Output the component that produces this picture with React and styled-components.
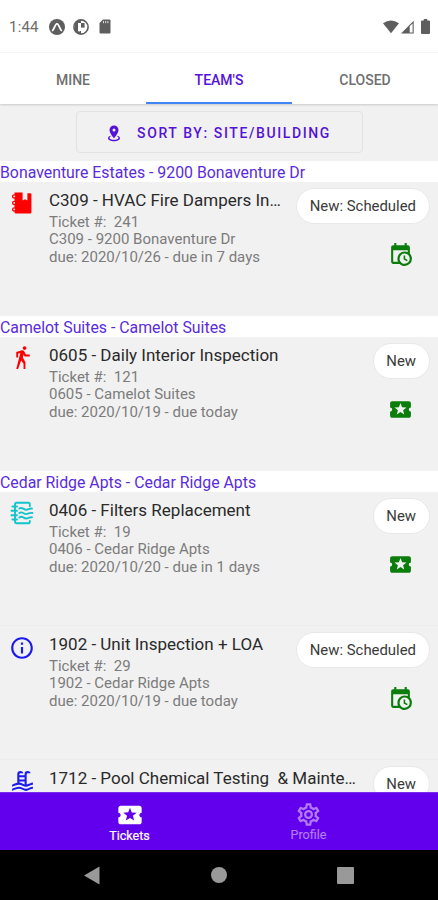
import styled, { createGlobalStyle } from "styled-components";
import { MdInfoOutline, MdLocalActivity } from "react-icons/md";

const SECTIONS = [
  {
    name: "Bonaventure Estates - 9200 Bonaventure Dr",
    tickets: [
      { icon: "damper", color: "#ff0000", title: "C309 - HVAC Fire Dampers Inspection", number: 241, site: "C309 - 9200 Bonaventure Dr", due: "2020/10/26 - due in 7 days", status: "New: Scheduled" },
    ],
  },
  {
    name: "Camelot Suites - Camelot Suites",
    tickets: [
      { icon: "walk", color: "#ff0000", title: "0605 - Daily Interior Inspection", number: 121, site: "0605 - Camelot Suites", due: "2020/10/19 - due today", status: "New" },
    ],
  },
  {
    name: "Cedar Ridge Apts - Cedar Ridge Apts",
    tickets: [
      { icon: "filter", color: "#14c4cc", title: "0406 - Filters Replacement", number: 19, site: "0406 - Cedar Ridge Apts", due: "2020/10/20 - due in 1 days", status: "New" },
      { icon: "info", color: "#1a1aee", title: "1902 - Unit Inspection + LOA", number: 29, site: "1902 - Cedar Ridge Apts", due: "2020/10/19 - due today", status: "New: Scheduled" },
      { icon: "pool", color: "#1a1aee", title: "1712 - Pool Chemical Testing\u00a0 & Maintenance", status: "New" },
    ],
  },
];

const PATHS = {
  walk: "M14.12,10H19V8.2H15.38L13.38,4.87C13.08,4.37 12.54,4.03 11.92,4.03C11.74,4.03 11.58,4.06 11.42,4.11L6,5.8V11H7.8V7.33L9.91,6.67L6,22H7.8L10.67,13.89L13,17V22H14.8V15.59L12.31,11.05L13.04,8.18M14,3.8C15,3.8 15.8,3 15.8,2C15.8,1 15,0.2 14,0.2C13,0.2 12.2,1 12.2,2C12.2,3 13,3.8 14,3.8Z",
  pool: "M2,15C3.67,14.25 5.33,13.5 7,13.25V5A3,3 0 0,1 10,2C11.31,2 12.42,2.83 12.83,4H10A1,1 0 0,0 9,5V6H14V5A3,3 0 0,1 17,2C18.31,2 19.42,2.83 19.83,4H17A1,1 0 0,0 16,5V14.94C18,14.62 20,13 22,13V15C19.78,15 17.56,17 15.33,17C13.11,17 10.89,15 8.67,15C6.44,15 4.22,16 2,17V15M14,8H9V10H14V8M14,12H9V13C10.67,13.16 12.33,14.31 14,14.79V12M2,19C4.22,18 6.44,17 8.67,17C10.89,17 13.11,19 15.33,19C17.56,19 19.78,17 22,17V19C19.78,19 17.56,21 15.33,21C13.11,21 10.89,19 8.67,19C6.44,19 4.22,20 2,21V19Z",
  calendar: "M15,13H16.5V15.82L18.94,17.23L18.19,18.53L15,16.69V13M19,8H5V19H9.67C9.24,18.09 9,17.07 9,16A7,7 0 0,1 16,9C17.07,9 18.09,9.24 19,9.67V8M5,21C3.89,21 3,20.1 3,19V5C3,3.89 3.89,3 5,3H6V1H8V3H16V1H18V3H19A2,2 0 0,1 21,5V11.1C22.24,12.36 23,14.09 23,16A7,7 0 0,1 16,23C14.09,23 12.36,22.24 11.1,21H5M16,11.15A4.85,4.85 0 0,0 11.15,16C11.15,18.68 13.32,20.85 16,20.85A4.85,4.85 0 0,0 20.85,16C20.85,13.32 18.68,11.15 16,11.15Z",
  marker: "M12,2C15.31,2 18,4.66 18,7.95C18,12.41 12,19 12,19C12,19 6,12.41 6,7.95C6,4.66 8.69,2 12,2M12,6A2,2 0 0,0 10,8A2,2 0 0,0 12,10A2,2 0 0,0 14,8A2,2 0 0,0 12,6M20,19C20,21.21 16.42,23 12,23C7.58,23 4,21.21 4,19C4,17.71 5.22,16.56 7.11,15.83L7.75,16.74C6.67,17.19 6,17.81 6,18.5C6,19.88 8.69,21 12,21C15.31,21 18,19.88 18,18.5C18,17.81 17.33,17.19 16.25,16.74L16.89,15.83C18.78,16.56 20,17.71 20,19Z",
  cog: "M12,8A4,4 0 0,1 16,12A4,4 0 0,1 12,16A4,4 0 0,1 8,12A4,4 0 0,1 12,8M12,10A2,2 0 0,0 10,12A2,2 0 0,0 12,14A2,2 0 0,0 14,12A2,2 0 0,0 12,10M10,22C9.75,22 9.54,21.82 9.5,21.58L9.13,18.93C8.5,18.68 7.96,18.34 7.44,17.94L4.95,18.95C4.73,19.03 4.46,18.95 4.34,18.73L2.34,15.27C2.21,15.05 2.27,14.78 2.46,14.63L4.57,12.97L4.5,12L4.57,11L2.46,9.37C2.27,9.22 2.21,8.95 2.34,8.73L4.34,5.27C4.46,5.05 4.73,4.96 4.95,5.05L7.44,6.05C7.96,5.66 8.5,5.32 9.13,5.07L9.5,2.42C9.54,2.18 9.75,2 10,2H14C14.25,2 14.46,2.18 14.5,2.42L14.87,5.07C15.5,5.32 16.04,5.66 16.56,6.05L19.05,5.05C19.27,4.96 19.54,5.05 19.66,5.27L21.66,8.73C21.79,8.95 21.73,9.22 21.54,9.37L19.43,11L19.5,12L19.43,13L21.54,14.63C21.73,14.78 21.79,15.05 21.66,15.27L19.66,18.73C19.54,18.95 19.27,19.04 19.05,18.95L16.56,17.95C16.04,18.34 15.5,18.68 14.87,18.93L14.5,21.58C14.46,21.82 14.25,22 14,22H10M11.25,4L10.88,6.61C9.68,6.86 8.62,7.5 7.85,8.39L5.44,7.35L4.69,8.65L6.8,10.2C6.4,11.37 6.4,12.64 6.8,13.8L4.68,15.36L5.43,16.66L7.86,15.62C8.63,16.5 9.68,17.14 10.87,17.38L11.24,20H12.76L13.13,17.39C14.32,17.14 15.37,16.5 16.14,15.62L18.57,16.66L19.32,15.36L17.2,13.81C17.6,12.64 17.6,11.37 17.2,10.2L19.31,8.65L18.56,7.35L16.15,8.39C15.38,7.5 14.32,6.86 13.12,6.62L12.75,4H11.25Z",
};

const Glyph = ({ name, size }) => (
  <svg width={size} height={size} viewBox="0 0 24 24" fill="currentColor" fillRule="evenodd">
    <path d={PATHS[name]} />
  </svg>
);

const DamperIcon = () => (
  <svg width="24" height="24" viewBox="0 0 24 24" fill="currentColor">
    <path d="M4.5 1.5H12.6V9.6L15 8.2L17.4 9.6V2.2H20.4Q21.4 2.2 21.4 3.2V21.2Q21.4 22.5 20.1 22.5H6Q4.5 22.5 4.5 21Z" />
    <g fill="#f1f1f1" stroke="currentColor" strokeWidth="1.3">
      <circle cx="4.2" cy="5.4" r="1.6" />
      <circle cx="4.2" cy="11.9" r="1.6" />
      <circle cx="4.2" cy="18.4" r="1.6" />
    </g>
  </svg>
);

const FilterIcon = () => (
  <svg width="24" height="24" viewBox="0 0 24 24" fill="none" stroke="currentColor" strokeWidth="1.9" strokeLinecap="round">
    <path d="M5 21V3.2Q5 1.7 6.5 1.7H18.2Q19.8 1.7 19.8 3.3V5M5 20.6Q5 22.3 6.7 22.3H18.2Q19.8 22.3 19.8 20.7V20" />
    <path d="M2.4 5.5H7M1.4 9.8H7M1.4 14.2H7M2.4 18.5H7" />
    <path d="M9.3 7.6C12 5.4 14 9 16.3 8.7S19.5 7 22 7.6M9.3 12C12 9.8 14 13.4 16.3 13.1S19.5 11.4 22.3 12M9.3 16.4C12 14.2 14 17.8 16.3 17.5S19.5 15.8 22 16.4" />
  </svg>
);

const TicketIcon = ({ name }) => {
  if (name === "damper") return <DamperIcon />;
  if (name === "filter") return <FilterIcon />;
  if (name === "info") return <MdInfoOutline size={26} />;
  return <Glyph name={name} size={25} />;
};

const StatusIcons = () => (
  <StatusGroup>
    <svg width="16" height="16" viewBox="0 0 16 16">
      <circle cx="8" cy="8" r="8" fill="#5e5e5e" />
      <path d="M3.6 11.5C5.7 9.4 6.2 4.6 8 4.6S10.3 9.4 12.4 11.5" fill="none" stroke="#fff" strokeWidth="1.7" strokeLinecap="round" />
    </svg>
    <svg width="16" height="16" viewBox="0 0 16 16">
      <circle cx="8" cy="8" r="7.1" fill="#fff" stroke="#5e5e5e" strokeWidth="1.6" />
      <path d="M1.6 4Q3.6 1 8 1V4H5V12H8V15Q3.6 15 1.6 12Z" fill="#5e5e5e" />
      <path d="M8 4H11.6V8.6H8Z" fill="#5e5e5e" />
      <path d="M6.2 5V12.6" stroke="#fff" strokeWidth="1.4" />
    </svg>
    <svg width="12" height="15" viewBox="0 0 12 15">
      <path d="M4 .5H10.5Q11.5.5 11.5 1.5V13.5Q11.5 14.5 10.5 14.5H1.5Q.5 14.5.5 13.5V4Z" fill="#5e5e5e" />
      <path d="M4.5 2V4.2M6.7 2V4.2M8.9 2V4.2" stroke="#ddd" strokeWidth="1" />
    </svg>
  </StatusGroup>
);

const SystemIcons = () => (
  <SystemGroup>
    <svg width="16" height="14" viewBox="0 0 16 14">
      <path d="M0 3.2Q8 -2.4 16 3.2L8 13.3Z" fill="#5e5e5e" />
    </svg>
    <svg width="13" height="14" viewBox="0 0 13 14">
      <path d="M0 13.5L12.7.7V13.5Z" fill="#5e5e5e" />
      <path d="M8.7 6.3L11.6 3.4V12.4H8.7Z" fill="#fff" />
    </svg>
    <svg width="9" height="15" viewBox="0 0 9 15">
      <path d="M2.8 0H6.2V1.5H8Q9 1.5 9 2.5V14Q9 15 8 15H1Q0 15 0 14V2.5Q0 1.5 1 1.5H2.8Z" fill="#5e5e5e" />
    </svg>
  </SystemGroup>
);

const Ticket = ({ ticket }) => (
  <TicketRow>
    <IconBox color={ticket.color}>
      <TicketIcon name={ticket.icon} />
    </IconBox>
    <TicketText>
      <TicketTitle>{ticket.title}</TicketTitle>
      {ticket.number ? (
        <>
          <TicketLine>Ticket #:&nbsp; {ticket.number}</TicketLine>
          <TicketLine>{ticket.site}</TicketLine>
          <TicketLine>due: {ticket.due}</TicketLine>
        </>
      ) : null}
    </TicketText>
    <TicketSide>
      <Chip>{ticket.status}</Chip>
      <Kind>
        {ticket.status === "New" ? <MdLocalActivity size={25} /> : <Glyph name="calendar" size={25} />}
      </Kind>
    </TicketSide>
  </TicketRow>
);

export default function App() {
  return (
    <Screen>
      <GlobalStyle />
      <StatusBar>
        <Clock>1:44</Clock>
        <StatusIcons />
        <SystemIcons />
      </StatusBar>
      <Tabs>
        <Tab>MINE</Tab>
        <Tab $active>TEAM'S</Tab>
        <Tab>CLOSED</Tab>
      </Tabs>
      <List>
        <SortButton>
          <Glyph name="marker" size={18} />
          <span>SORT BY: SITE/BUILDING</span>
        </SortButton>
        {SECTIONS.map((section) => (
          <Section key={section.name}>
            <SectionTitle>{section.name}</SectionTitle>
            {section.tickets.map((ticket) => (
              <Ticket key={ticket.title} ticket={ticket} />
            ))}
          </Section>
        ))}
      </List>
      <BottomNav>
        <NavItem $active>
          <MdLocalActivity size={28} />
          <span>Tickets</span>
        </NavItem>
        <NavItem>
          <Glyph name="cog" size={27} />
          <span>Profile</span>
        </NavItem>
      </BottomNav>
      <SystemNav>
        <svg width="16" height="19" viewBox="0 0 16 19">
          <path d="M0 9.5L15.5.5V18.5Z" fill="#999" />
        </svg>
        <svg width="16" height="16" viewBox="0 0 16 16">
          <circle cx="8" cy="8" r="8" fill="#999" />
        </svg>
        <svg width="17" height="17" viewBox="0 0 17 17">
          <rect width="17" height="17" rx="1" fill="#999" />
        </svg>
      </SystemNav>
    </Screen>
  );
}

const GlobalStyle = createGlobalStyle`
  * {
    box-sizing: border-box;
  }
  body {
    margin: 0;
    font-family: Roboto, sans-serif;
  }
  svg {
    display: block;
    flex-shrink: 0;
  }
`;

const Screen = styled.div`
  display: flex;
  flex-flow: column;
  width: 438px;
  height: 900px;
  overflow: hidden;
  background: #f1f1f1;
`;

const StatusBar = styled.div`
  display: flex;
  flex-shrink: 0;
  align-items: center;
  height: 53px;
  padding: 1px 8px 0 9px;
  background: #ffffff;
  border-bottom: 1px solid #f8f8f8;
`;

const Clock = styled.div`
  width: 40px;
  font-size: 15px;
  letter-spacing: 0.2px;
  color: #6c6c6c;
`;

const StatusGroup = styled.div`
  display: flex;
  align-items: center;
  gap: 8px;
  & > :last-child {
    margin-left: 2px;
  }
`;

const SystemGroup = styled.div`
  display: flex;
  align-items: center;
  margin-left: auto;
  gap: 2px;
  & > :last-child {
    margin-left: 5px;
  }
`;

const Tabs = styled.div`
  display: flex;
  flex-shrink: 0;
  height: 51px;
  background: #ffffff;
  box-shadow: 0 1px 2px rgba(0, 0, 0, 0.16);
  z-index: 1;
`;

const Tab = styled.div`
  display: flex;
  flex: 1;
  align-items: center;
  justify-content: center;
  padding-top: 5px;
  border-bottom: 2px solid ${(props) => (props.$active ? "#4285f4" : "transparent")};
  font-size: 14px;
  font-weight: 500;
  color: ${(props) => (props.$active ? "#5512e0" : "#6f6f6f")};
`;

const List = styled.div`
  display: flex;
  flex-flow: column;
  flex: 1;
  min-height: 0;
  overflow: hidden;
`;

const Section = styled.section`
  flex-shrink: 0;
`;

const SortButton = styled.button`
  display: flex;
  flex-shrink: 0;
  align-items: center;
  justify-content: center;
  gap: 14px;
  align-self: center;
  width: 287px;
  height: 42px;
  margin: 7px 0 8px;
  padding: 1px 8px 0 6px;
  border: 1px solid #e2e2e2;
  border-radius: 4px;
  background: transparent;
  font-family: inherit;
  font-size: 14px;
  font-weight: 500;
  letter-spacing: 1.6px;
  color: #5512d8;
`;

const SectionTitle = styled.div`
  height: 21px;
  padding-top: 1px;
  background: #ffffff;
  font-size: 15.85px;
  line-height: 21px;
  color: #5a2be0;
`;

const TicketRow = styled.div`
  display: flex;
  height: 134px;
  padding: 6px 8px 0 9px;
  border-bottom: 1px solid #ececec;
  &:last-child {
    border-bottom: none;
  }
`;

const IconBox = styled.div`
  display: flex;
  justify-content: center;
  width: 26px;
  height: 30px;
  padding-top: 3px;
  color: ${(props) => props.color};
`;

const TicketText = styled.div`
  flex: 1;
  min-width: 0;
  margin-left: 14px;
`;

const TicketTitle = styled.div`
  height: 25px;
  margin-bottom: 1px;
  font-size: 17px;
  line-height: 25px;
  color: #2a2a2a;
  white-space: nowrap;
  overflow: hidden;
  text-overflow: ellipsis;
`;

const TicketLine = styled.div`
  font-size: 15px;
  line-height: 17.4px;
  color: #7c7c7c;
  white-space: nowrap;
`;

const TicketSide = styled.div`
  display: flex;
  flex-flow: column;
  align-items: flex-end;
  margin-left: 14px;
`;

const Chip = styled.div`
  height: 36px;
  padding: 0 13px 0 12.5px;
  border: 1px solid #e8e8e8;
  border-radius: 18px;
  background: #ffffff;
  font-size: 14.9px;
  line-height: 35px;
  color: #3a3a3a;
  white-space: nowrap;
`;

const Kind = styled.div`
  display: flex;
  align-items: center;
  height: 26px;
  margin: 17px 17.5px 0 0;
  color: #0a7d0a;
`;

const BottomNav = styled.div`
  display: flex;
  flex-shrink: 0;
  justify-content: center;
  height: 58px;
  background: #6200ee;
  border-top: 1px solid #7a2cf0;
`;

const NavItem = styled.div`
  display: flex;
  flex-flow: column;
  align-items: center;
  justify-content: space-between;
  width: 179px;
  padding: 8px 0 8px;
  font-size: 12.6px;
  line-height: 14px;
  -webkit-text-stroke: 0.2px;
  color: ${(props) => (props.$active ? "#ffffff" : "#b27cf6")};
`;

const SystemNav = styled.div`
  display: flex;
  flex-shrink: 0;
  align-items: center;
  justify-content: space-between;
  height: 50px;
  padding: 0 84px;
  background: #000000;
`;
